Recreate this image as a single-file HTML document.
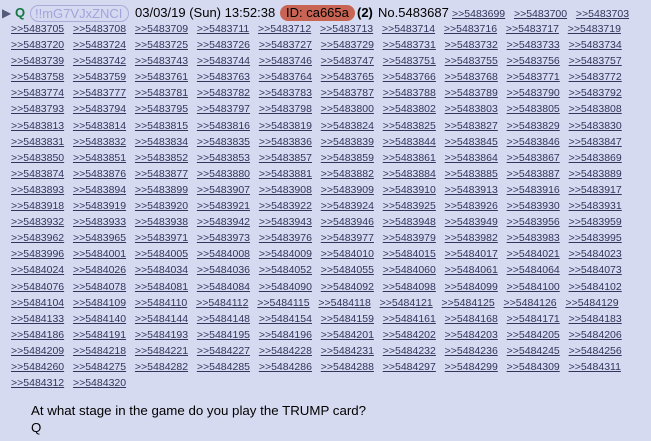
<!DOCTYPE html>
<html><head><meta charset="utf-8"><style>
body{margin:0;background:#d6daf0;width:651px;height:441px;overflow:hidden;font-family:"Liberation Sans",Arial,sans-serif;position:relative}
.h{position:absolute;top:4px;left:0;height:18px;font-size:13px;white-space:nowrap;line-height:18px}
.h span{position:absolute;top:0}
.tri{left:2px;font-size:12px;color:#555a7a}
.q{left:15px;color:#117743;font-weight:bold}
.trip{left:30px;top:1px!important;height:15px;line-height:15px;width:93px;border:1px solid #a8acd8;border-radius:9px;color:#a0a4dc;padding-left:4px;box-sizing:content-box}
.date{left:135px}
.id{left:280px;top:1px!important;height:16px;line-height:16px;background:#c86454;border-radius:8px;padding:0 6px;color:#000}
.cnt{left:357px;font-weight:bold}
.no{left:378px}
a{color:#34345c;text-decoration:underline;font-size:10.5px;margin-right:8.8px}
.hl{position:absolute;left:452px;top:6px;line-height:14px;white-space:nowrap}
.rows{position:absolute;left:11px;top:21px;line-height:16.1px;white-space:nowrap;font-size:10.5px}
.rows div{height:16.1px}
.msg{position:absolute;left:31px;top:402px;font-size:13.3px;line-height:17px;color:#000}
</style></head><body>
<div class="h">
<span class="tri">▶</span><span class="q">Q</span><span class="trip">!!mG7VJxZNCI</span><span class="date">03/03/19 (Sun) 13:52:38</span><span class="id">ID: ca665a</span><span class="cnt">(2)</span><span class="no">No.5483687</span>
</div>
<div class="hl"><a>&gt;&gt;5483699</a><a>&gt;&gt;5483700</a><a>&gt;&gt;5483703</a></div>
<div class="rows" id="r"></div>
<div class="msg">At what stage in the game do you play the TRUMP card?<br>Q</div>
<script>
var R=[
"5483705 708 709 711 712 713 714 716 717 719",
"5483720 724 725 726 727 729 731 732 733 734",
"5483739 742 743 744 746 747 751 755 756 757",
"5483758 759 761 763 764 765 766 768 771 772",
"5483774 777 781 782 783 787 788 789 790 792",
"5483793 794 795 797 798 800 802 803 805 808",
"5483813 814 815 816 819 824 825 827 829 830",
"5483831 832 834 835 836 839 844 845 846 847",
"5483850 851 852 853 857 859 861 864 867 869",
"5483874 876 877 880 881 882 884 885 887 889",
"5483893 894 899 907 908 909 910 913 916 917",
"5483918 919 920 921 922 924 925 926 930 931",
"5483932 933 938 942 943 946 948 949 956 959",
"5483962 965 971 973 976 977 979 982 983 995",
"5483996 5484001 005 008 009 010 015 017 021 023",
"5484024 026 034 036 052 055 060 061 064 073",
"5484076 078 081 084 090 092 098 099 100 102",
"5484104 109 110 112 115 118 121 125 126 129",
"5484133 140 144 148 154 159 161 168 171 183",
"5484186 191 193 195 196 201 202 203 205 206",
"5484209 218 221 227 228 231 232 236 245 256",
"5484260 275 282 285 286 288 297 299 309 311",
"5484312 320"];
var h="";
R.forEach(function(l){var p=l.split(" "),pre=p[0].slice(0,4);h+="<div>";p.forEach(function(n){if(n.length==3)n=pre+n;else pre=n.slice(0,4);h+="<a>&gt;&gt;"+n+"</a>";});h+="</div>";});
document.getElementById("r").innerHTML=h;
</script>
</body></html>
